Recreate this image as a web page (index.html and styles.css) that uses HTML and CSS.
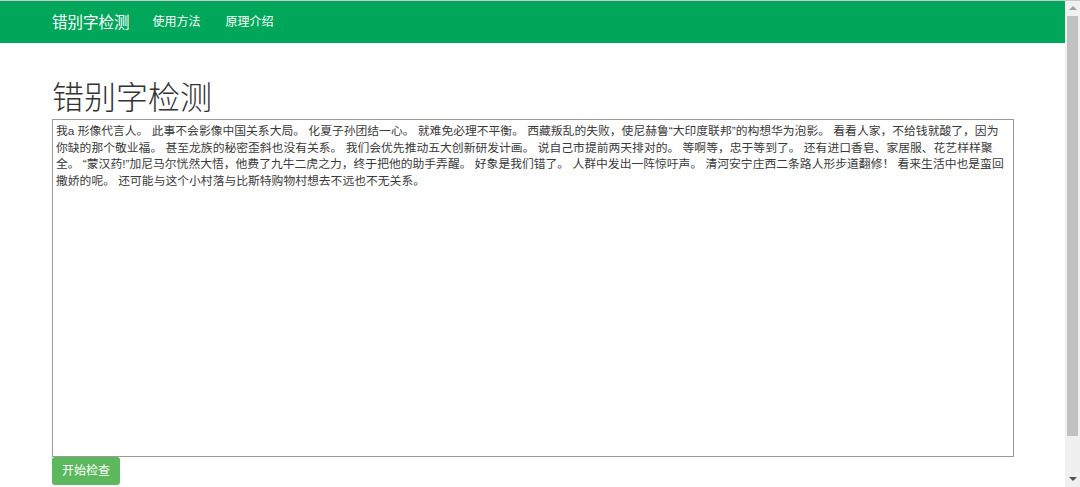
FILE: index.html
```html
<!DOCTYPE html>
<html lang="zh-CN">

<head>
    <meta charset="UTF-8">
    <meta name="viewport" content="width=device-width, initial-scale=1.0">
    <title>错别字检测</title>
    <link rel="stylesheet" href="styles.css">
</head>

<body>
    <div class="window">
        <div class="page">
            <!-- Top Navigation -->
            <nav class="navbar">
                <a class="brand" href="#">错别字检测</a>
                <a class="nav-link" href="#">使用方法</a>
                <a class="nav-link" href="#">原理介绍</a>
            </nav>

            <!-- Checker -->
            <div class="container">
                <h1 class="title">错别字检测</h1>
                <textarea class="input-text" id="inputText">我a 形像代言人。 此事不会影像中国关系大局。 化夏子孙团结一心。 就难免必理不平衡。 西藏叛乱的失败，使尼赫鲁“大印度联邦”的构想华为泡影。 看看人家，不给钱就酸了，因为
你缺的那个敬业福。 甚至龙族的秘密歪斜也没有关系。 我们会优先推动五大创新研发计画。 说自己市提前两天排对的。 等啊等，忠于等到了。 还有进口香皂、家居服、花艺样样聚
全。 “蒙汉药!”加尼马尔恍然大悟，他费了九牛二虎之力，终于把他的助手弄醒。 好象是我们错了。 人群中发出一阵惊吁声。 清河安宁庄西二条路人形步道翻修！ 看来生活中也是蛮回
撒娇的呢。 还可能与这个小村落与比斯特购物村想去不远也不无关系。</textarea>
                <button class="check-button">开始检查</button>
            </div>
        </div>

        <!-- Scrollbar -->
        <div class="scrollbar">
            <div class="arrow arrow-up"></div>
            <div class="thumb"></div>
            <div class="arrow arrow-down"></div>
        </div>
    </div>
</body>

</html>
```

FILE: styles.css
```css
html,
body {
    margin: 0;
    height: 100%;
    overflow: hidden;
}

body {
    font-family: "Liberation Sans", "Noto Sans CJK SC", sans-serif;
    color: #333;
    background: #fff;
}

.window {
    display: flex;
    height: 100%;
    box-sizing: border-box;
    border-top: 1px solid #c9c9c9;
}

.page {
    flex: 1;
    min-width: 0;
}

/* Navbar */
.navbar {
    display: flex;
    align-items: center;
    height: 42px;
    box-sizing: border-box;
    padding: 0 52px 3px;
    background-color: #00a65a;
}

.brand {
    color: #fff;
    font-size: 15.5px;
    text-decoration: none;
    margin-right: 23px;
}

.nav-link {
    color: #fff;
    font-size: 12px;
    text-decoration: none;
    margin-right: 25px;
}

/* Main */
.container {
    padding: 0 51px 0 52px;
}

.title {
    font-size: 32px;
    font-weight: 300;
    line-height: 40px;
    margin: 35px 0 1px;
    color: #333;
}

.input-text {
    display: block;
    width: 100%;
    height: 338px;
    box-sizing: border-box;
    margin: 0;
    padding: 3px 3px;
    border: 1px solid #999;
    font-family: "Liberation Sans", "Noto Sans CJK SC", sans-serif;
    font-size: 11.8px;
    line-height: 16.5px;
    color: #3a3a3a;
    white-space: pre-wrap;
    resize: none;
    outline: none;
}

.check-button {
    display: block;
    padding: 5px 10px;
    font-family: "Liberation Sans", "Noto Sans CJK SC", sans-serif;
    font-size: 12px;
    line-height: 18px;
    color: #fff;
    background-color: #5cb85c;
    border: none;
    border-radius: 3px;
    cursor: pointer;
}

/* Scrollbar */
.scrollbar {
    width: 15px;
    display: flex;
    flex-direction: column;
    align-items: center;
    background: #f0f0f0;
}

.arrow {
    width: 0;
    height: 0;
    border-left: 4px solid transparent;
    border-right: 4px solid transparent;
}

.arrow-up {
    margin: 5px 0 6px;
    border-bottom: 4px solid #a3a3a3;
}

.arrow-down {
    margin: auto 0 6px;
    border-top: 4px solid #505050;
}

.thumb {
    width: 11px;
    height: 420px;
    background: #c1c1c1;
}
```
